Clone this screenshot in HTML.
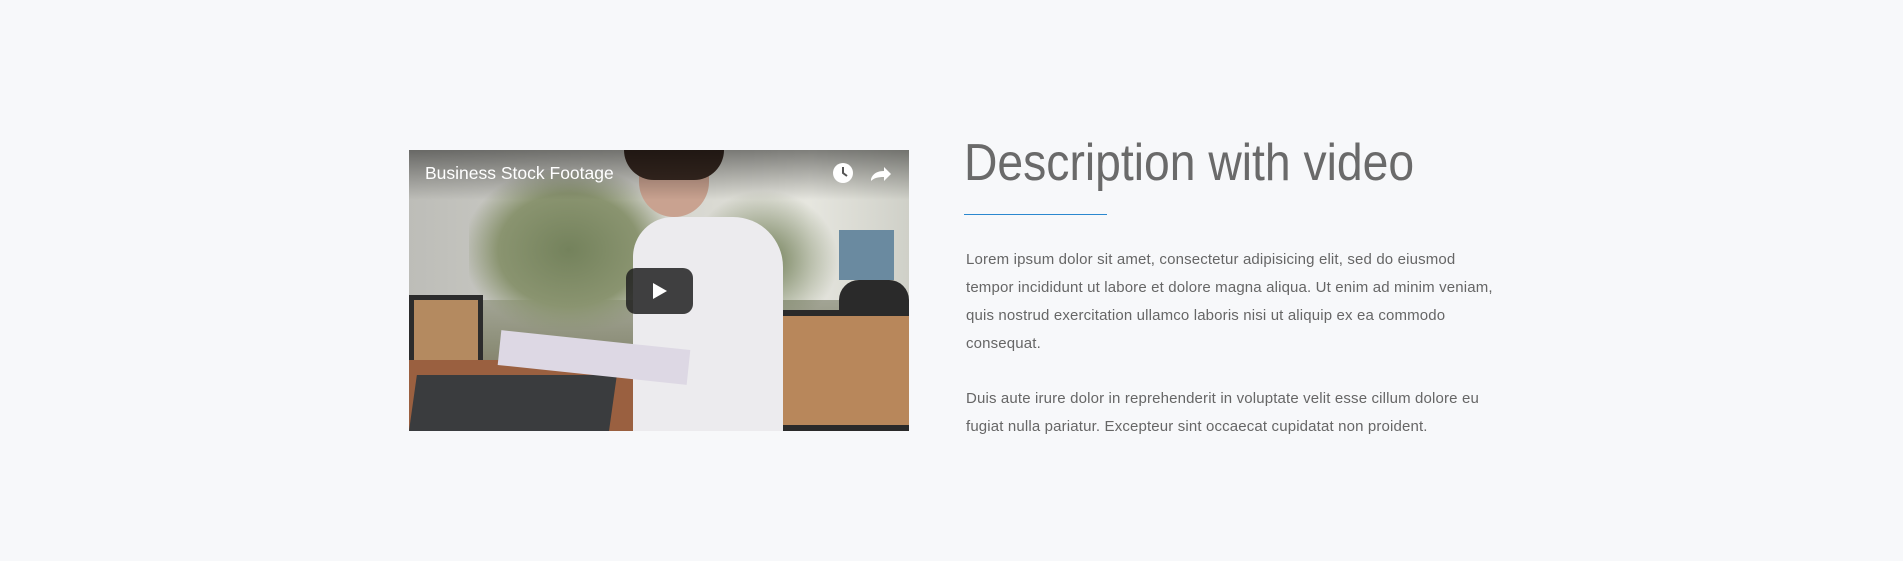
<!DOCTYPE html>
<html><head><meta charset="utf-8"><style>
html,body{margin:0;padding:0;}
body{width:1903px;height:561px;background:#f7f8fa;position:relative;overflow:hidden;font-family:"Liberation Sans",sans-serif;}
.v{position:absolute;left:409px;top:150px;width:500px;height:281px;overflow:hidden;background:linear-gradient(180deg,#c9c9c4 0%,#b4b6ac 40%,#8c8e78 70%,#6d5a45 100%);}
.v div{position:absolute;}
h1{position:absolute;left:964px;top:133px;margin:0;font-size:52px;color:#6a6a6a;font-weight:normal;white-space:nowrap;transform:scaleX(0.89);transform-origin:left;font-family:"Liberation Sans",sans-serif;line-height:60px;}
.line{position:absolute;left:964px;top:214px;width:143px;height:1px;background:#2b88cf;}
p{position:absolute;left:966px;margin:0;font-size:15px;letter-spacing:0.15px;line-height:28px;color:#666;white-space:nowrap;}
</style></head><body>
<div class="v">
 <div style="left:0;top:0;width:500px;height:150px;background:linear-gradient(90deg,#bdbdb8,#d9d9d2 60%,#e6e6df 80%,#cfd0c8)"></div>
 <div style="left:60px;top:20px;width:200px;height:160px;background:radial-gradient(ellipse at center,#74825c 0%,#8a9470 50%,rgba(160,165,140,0) 75%)"></div>
 <div style="left:280px;top:40px;width:150px;height:140px;background:radial-gradient(ellipse at center,#6f7d55 0%,rgba(150,160,130,0) 70%)"></div>
 <div style="left:430px;top:80px;width:55px;height:50px;background:#6a8aa0"></div>
 <div style="left:430px;top:130px;width:70px;height:40px;background:#2a2a2a;border-radius:20px 20px 0 0"></div>
 <div style="left:0;top:145px;width:74px;height:80px;background:#b48a60;border:5px solid #2c2c2c;box-sizing:border-box"></div>
 <div style="left:0;top:210px;width:260px;height:71px;background:#9a6040"></div>
 <div style="left:0;top:225px;width:200px;height:56px;background:#3a3c3e;transform:skewX(-8deg);transform-origin:bottom"></div>
 <div style="left:363px;top:160px;width:137px;height:121px;background:#b8875b;border:6px solid #2a2a2a;border-right:none;box-sizing:border-box"></div>
 <div style="left:224px;top:67px;width:150px;height:214px;background:#ecebee;border-radius:40px 50px 0 0"></div>
 <div style="left:90px;top:190px;width:190px;height:35px;background:#ddd8e4;transform:rotate(6deg)"></div>
 <div style="left:230px;top:0;width:70px;height:67px;background:#c9a290;border-radius:0 0 35px 35px"></div>
 <div style="left:215px;top:0;width:100px;height:30px;background:#3a2a22;border-radius:0 0 30px 30px"></div>
 <div style="left:0;top:0;width:500px;height:50px;background:linear-gradient(180deg,rgba(0,0,0,.45),rgba(0,0,0,0))"></div>
 <div style="left:16px;top:13px;color:#fff;font-size:17.5px;white-space:nowrap">Business Stock Footage</div>
 <svg style="position:absolute;left:422px;top:11px" width="62" height="24" viewBox="0 0 62 24"><circle cx="12" cy="12" r="10" fill="#fff"/><path d="M12 6v6l4 3" stroke="#555" stroke-width="2" fill="none"/><path d="M40 18c2-6 7-8 13-8v-4l7 7-7 7v-4c-6 0-10 1-13 4z" fill="#fff"/></svg>
 <div style="left:217px;top:118px;width:67px;height:46px;background:rgba(33,33,33,.85);border-radius:10px"></div>
 <svg style="position:absolute;left:242px;top:132px" width="18" height="18"><path d="M2 1L16 9 2 17z" fill="#fff"/></svg>
</div>
<h1>Description with video</h1>
<div class="line"></div>
<p style="top:246px">Lorem ipsum dolor sit amet, consectetur adipisicing elit, sed do eiusmod<br>tempor incididunt ut labore et dolore magna aliqua. Ut enim ad minim veniam,<br>quis nostrud exercitation ullamco laboris nisi ut aliquip ex ea commodo<br>consequat.</p>
<p style="top:385px">Duis aute irure dolor in reprehenderit in voluptate velit esse cillum dolore eu<br>fugiat nulla pariatur. Excepteur sint occaecat cupidatat non proident.</p>
</body></html>
